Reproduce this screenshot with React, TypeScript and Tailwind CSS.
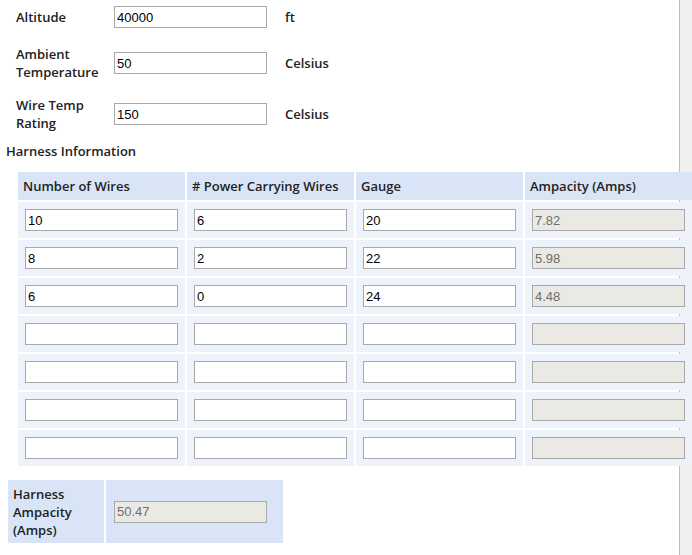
const wires = [
  { count: '10', power: '6', gauge: '20', amps: '7.82' },
  { count: '8', power: '2', gauge: '22', amps: '5.98' },
  { count: '6', power: '0', gauge: '24', amps: '4.48' },
  { count: '', power: '', gauge: '', amps: '' },
  { count: '', power: '', gauge: '', amps: '' },
  { count: '', power: '', gauge: '', amps: '' },
  { count: '', power: '', gauge: '', amps: '' },
];

const label = "font-['Open_Sans',sans-serif] font-semibold text-[13px] leading-[18px] text-[#222]";

const Field = ({ value, disabled }: { value: string; disabled?: boolean }) => (
  <input
    readOnly
    value={value}
    className={`block h-[22px] w-[153px] border border-[#a9a9a9] px-[2px] font-['Liberation_Sans',Arial,sans-serif] text-[13px] outline-none ${
      disabled ? 'bg-[#ebe9e4] text-[#6d6d6d]' : 'bg-white text-black'
    }`}
  />
);

const ParamRow = ({ name, value, unit, className }: { name: React.ReactNode; value: string; unit: string; className: string }) => (
  <div className={`flex items-center ${className}`}>
    <div className={`w-[114px] shrink-0 pl-[16px] ${label}`}>{name}</div>
    <Field value={value} />
    <div className={`pl-[18px] ${label}`}>{unit}</div>
  </div>
);

export default function App() {
  return (
    <div className="h-[555px] w-[692px] overflow-hidden bg-[#f0f0f0]">
      <div className="h-full w-[680px] border-r border-[#bdbdbd] bg-white">
        <ParamRow className="h-[34px]" name="Altitude" value="40000" unit="ft" />
        <ParamRow className="mt-[8px] h-[42px]" name={<>Ambient<br />Temperature</>} value="50" unit="Celsius" />
        <ParamRow className="mt-[9px] h-[42px]" name={<>Wire Temp<br />Rating</>} value="150" unit="Celsius" />

        <div className={`mt-[7px] pl-[6px] ${label}`}>Harness Information</div>

        <table className="ml-[16px] mt-[10px] w-[678px] border-separate border-spacing-[2px]">
          <thead>
            <tr>
              {['Number of Wires', '# Power Carrying Wires', 'Gauge', 'Ampacity (Amps)'].map((h) => (
                <th key={h} className={`h-[28px] w-[167px] bg-[#d9e5f7] pl-[5px] text-left ${label}`}>
                  {h}
                </th>
              ))}
            </tr>
          </thead>
          <tbody>
            {wires.map((w, i) => (
              <tr key={i}>
                <td className="bg-[#eef3fb] p-[7px]"><Field value={w.count} /></td>
                <td className="bg-[#eef3fb] p-[7px]"><Field value={w.power} /></td>
                <td className="bg-[#eef3fb] p-[7px]"><Field value={w.gauge} /></td>
                <td className="bg-[#eef3fb] p-[7px]"><Field value={w.amps} disabled /></td>
              </tr>
            ))}
          </tbody>
        </table>

        <table className="ml-[6px] mt-[10px] border-separate border-spacing-[2px]">
          <tbody>
            <tr>
              <td className={`h-[63px] w-[96px] bg-[#d9e5f7] pl-[5px] align-middle ${label}`}>
                Harness<br />Ampacity<br />(Amps)
              </td>
              <td className="w-[177px] bg-[#d9e5f7] pl-[8px] align-middle">
                <Field value="50.47" disabled />
              </td>
            </tr>
          </tbody>
        </table>
      </div>
    </div>
  );
}
